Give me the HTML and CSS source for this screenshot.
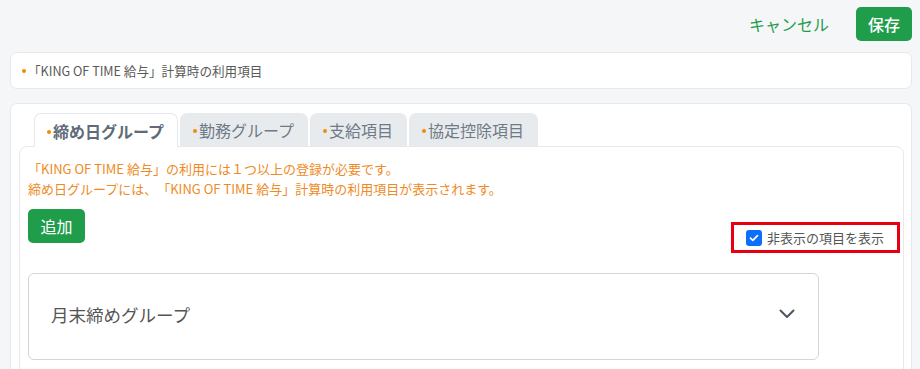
FILE: index.html
```html
<!DOCTYPE html>
<html lang="ja">
<head>
<meta charset="utf-8">
<link rel="stylesheet" href="styles.css">
</head>
<body>
<header class="topbar">
  <button class="btn-link">キャンセル</button>
  <button class="btn-green btn-save">保存</button>
</header>

<section class="card card-info">
  <span class="dot"></span>「KING OF TIME 給与」計算時の利用項目
</section>

<section class="card card-main">
  <nav class="tabs">
    <div class="tab active"><span class="dot"></span>締め日グループ</div>
    <div class="tab"><span class="dot"></span>勤務グループ</div>
    <div class="tab"><span class="dot"></span>支給項目</div>
    <div class="tab"><span class="dot"></span>協定控除項目</div>
  </nav>
  <div class="panel">
    <p class="notice">「KING OF TIME 給与」の利用には１つ以上の登録が必要です。<br>締め日グループには、「KING OF TIME 給与」計算時の利用項目が表示されます。</p>
    <div class="action-row">
      <button class="btn-green btn-add">追加</button>
      <label class="show-hidden">
        <span class="check">
          <svg width="10" height="8" viewBox="0 0 10 8"><path d="M1.5 4.2 L3.8 6.3 L8.5 1.6" fill="none" stroke="#fff" stroke-width="1.8" stroke-linecap="round" stroke-linejoin="round"/></svg>
        </span>
        非表示の項目を表示
      </label>
    </div>
    <div class="accordion">
      <span class="acc-title">月末締めグループ</span>
      <svg class="chevron" width="16" height="10" viewBox="0 0 16 10"><path d="M1.5 1.5 L8 8 L14.5 1.5" fill="none" stroke="#4b5563" stroke-width="2" stroke-linecap="round" stroke-linejoin="round"/></svg>
    </div>
  </div>
</section>
</body>
</html>
```

FILE: styles.css
```css
* { box-sizing: border-box; }
html, body { margin: 0; padding: 0; }
body {
  background: #f5f6f8;
  font-family: "Noto Sans CJK JP", "Noto Sans", sans-serif;
  color: #555;
  overflow: hidden;
  height: 369px;
  text-spacing-trim: space-all;
}
button { font-family: inherit; cursor: pointer; }

.topbar {
  display: flex;
  justify-content: flex-end;
  align-items: center;
  gap: 15px;
  padding: 7px 8px 0 0;
  height: 41px;
}
.btn-link {
  background: none;
  border: none;
  color: #1f9d4b;
  font-size: 16px;
  padding: 0 12px;
  height: 34px;
}
.btn-green {
  background: #1f9d4b;
  color: #fff;
  border: none;
  border-radius: 5px;
  font-size: 16px;
  height: 34px;
  padding: 0;
}
.btn-save { width: 56px; font-weight: 500; }

.card {
  background: #fff;
  border: 1px solid #e8e9ec;
  border-radius: 7px;
  margin: 0 8px 0 10px;
}
.card-info {
  margin-top: 11px;
  height: 37px;
  display: flex;
  align-items: center;
  padding-left: 11px;
  font-size: 12.6px;
  color: #595959;
}
.dot {
  display: inline-block;
  flex: none;
  width: 4px;
  height: 4px;
  border-radius: 50%;
  background: #f08c00;
  margin-right: 2px;
}

.card-main {
  margin-top: 14px;
  padding: 9px 3px 0 8px;
  height: 300px;
  border-bottom: none;
}
.tabs {
  display: flex;
  gap: 2px;
  padding-left: 15px;
  position: relative;
  z-index: 1;
}
.tab {
  height: 33px;
  display: flex;
  align-items: center;
  padding: 0 13px 0 12px;
  font-size: 16px;
  color: #6f7a87;
  background: #e8ebee;
  border-radius: 7px 7px 0 0;
  border: 1px solid #e8ebee;
  border-bottom: none;
}
.tab .dot { margin-right: 2px; position: relative; top: 1px; }
.tab.active {
  background: #fff;
  border-color: #e5e7ea;
  font-weight: 700;
  color: #5f6b78;
  height: 34px;
  margin-bottom: -1px;
}
.panel {
  border: 1px solid #e8e9ec;
  border-radius: 8px;
  padding: 12px 3px 0 8px;
  width: 885px;
  height: 260px;
}
.notice {
  margin: 0;
  font-size: 13px;
  line-height: 20px;
  color: #f08a24;
}
.action-row {
  display: flex;
  justify-content: space-between;
  align-items: flex-end;
  margin-top: 10px;
}
.btn-add { width: 57px; }
.show-hidden {
  display: flex;
  align-items: center;
  gap: 5px;
  width: 169px;
  height: 31px;
  border: 3px solid #e60012;
  padding-left: 12px;
  font-size: 13px;
  color: #555;
  margin-bottom: -10px;
}
.check {
  width: 16px;
  height: 16px;
  border-radius: 3px;
  background: #0d6efd;
  display: inline-flex;
  align-items: center;
  justify-content: center;
}
.accordion {
  margin-top: 30px;
  width: 791px;
  height: 87px;
  border: 1px solid #d5d5d5;
  border-radius: 6px;
  display: flex;
  align-items: center;
  justify-content: space-between;
  padding: 0 23px 0 22px;
}
.acc-title {
  font-size: 17.5px;
  color: #555;
  position: relative;
  top: -2px;
}
.chevron { position: relative; top: -3px; }
```
